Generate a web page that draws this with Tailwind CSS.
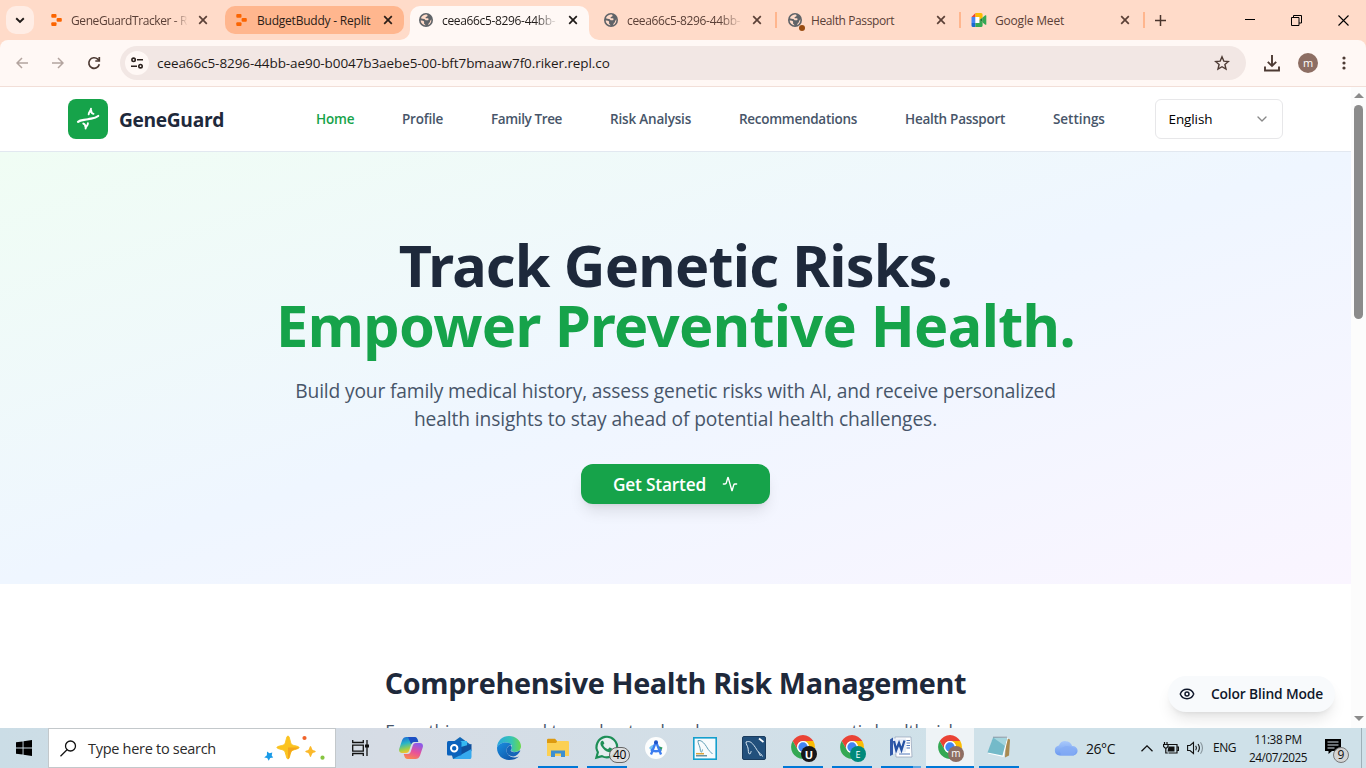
<!DOCTYPE html>
<html lang="en">
<head>
<meta charset="utf-8">
<title>GeneGuard</title>
<script src="https://cdn.jsdelivr.net/npm/@tailwindcss/browser@4"></script>
</head>
<body class="flex h-screen w-screen flex-col overflow-hidden bg-white font-['Open_Sans','Noto_Sans',sans-serif] text-black">

<!-- shared symbols -->
<svg class="hidden">
  <symbol id="x" viewBox="0 0 10 10"><path d="M1.2 1.2l7.6 7.6M8.8 1.2l-7.6 7.6" stroke="currentColor" stroke-width="1.7" fill="none"/></symbol>
  <symbol id="replit" viewBox="0 0 11 12"><g fill="#fb6400"><rect x=".3" y="0" width="5.2" height="3.7" rx="1"/><rect x="5.6" y="4.1" width="5.2" height="3.7" rx="1"/><rect x=".3" y="8.2" width="5.2" height="3.7" rx="1"/></g></symbol>
  <symbol id="globe" viewBox="0 0 14 14"><circle cx="7" cy="7" r="7" fill="#5f6368"/><path d="M6.6 1.6C8 1.3 8.8 2 8.5 2.9c-.4.8-1.8.6-1.9 1.5-.1.8.9.9 1.700.8 1-.1 1.300.5 1.200 1.200-.2.8-1.200 1-2.100.9-1.300-.1-1.200-1.200-2.300-1.400C4 5.700 3 5.800 1.900 5.300 2.600 3.300 4.300 1.900 6.600 1.600z" fill="#ffdbc9"/><path d="M1.600 7.600c1.600 0 3.100.1 3.500 1.200.3.900-.4 1.200.1 2 .4.600 1.200.6 1.200 1.600C3.800 12.100 1.800 10.200 1.600 7.600zM12.300 6.200c.4 2.500-.9 4.900-3.200 5.900.1-1.200.6-1.600 1.300-2.300.9-.9.700-2.500 1.900-3.600z" fill="#ffdbc9"/></symbol>
  <symbol id="chrome" viewBox="0 0 48 48">
    <path fill="#ea4335" d="M4.950 13A22 22 0 0 1 43.050 13H24A11 11 0 0 0 14.470 29.500Z"/>
    <path transform="rotate(120 24 24)" fill="#fbbc04" d="M4.950 13A22 22 0 0 1 43.050 13H24A11 11 0 0 0 14.470 29.500Z"/>
    <path transform="rotate(240 24 24)" fill="#34a853" d="M4.950 13A22 22 0 0 1 43.050 13H24A11 11 0 0 0 14.470 29.500Z"/>
    <circle cx="24" cy="24" r="11" fill="#fff"/><circle cx="24" cy="24" r="8.600" fill="#4285f4"/>
  </symbol>
</svg>

<!-- tab strip -->
<div class="flex h-10 shrink-0 items-start bg-[#ffdbc9] text-[12px] text-[#5b4037]">
  <div class="mt-1.5 ml-1.5 flex h-7 w-7 items-center justify-center rounded-[10px] bg-[#ffede5]">
    <svg width="10" height="7" viewBox="0 0 10 7"><path d="M1.200 1.300L5 5l3.800-3.700" stroke="#1f1a18" stroke-width="1.900" fill="none"/></svg>
  </div>
  <div class="flex h-10 w-[191px] items-center pl-[17px]">
    <svg width="11" height="12"><use href="#replit"/></svg>
    <span class="ml-[9px] w-[117px] mask-r-from-[88%] mask-r-to-100% pt-0.5 whitespace-nowrap tracking-[-0.400px]">GeneGuardTracker - R</span>
    <svg class="ml-[10px]" width="10" height="10"><use href="#x"/></svg>
  </div>
  <div class="mt-1.5 flex h-7 w-[179px] items-center rounded-[10px] bg-[#ffb68e] pl-[11px] text-[#2b1d17]">
    <svg width="11" height="12"><use href="#replit"/></svg>
    <span class="ml-2.5 w-[116px] pt-0.5 whitespace-nowrap tracking-[-0.220px]">BudgetBuddy - Replit</span>
    <svg class="ml-[10px]" width="10" height="10"><use href="#x"/></svg>
  </div>
  <div class="relative mt-1.5 ml-1.5 flex h-[34px] w-[179px] items-start rounded-t-[10px] bg-[#fff8f5] text-[#1f1a18]">
    <svg class="absolute bottom-0 -left-2.5" width="10" height="10"><path d="M10 0v10H0A10 10 0 0 0 10 0z" fill="#fff8f5"/></svg>
    <svg class="absolute -right-2.5 bottom-0" width="10" height="10"><path d="M0 0v10h10A10 10 0 0 1 0 0z" fill="#fff8f5"/></svg>
    <div class="flex h-7 items-center pl-[9px]">
      <svg width="14" height="14"><use href="#globe"/></svg>
      <span class="ml-[9px] w-[116px] mask-r-from-[80%] mask-r-to-100% pt-0.5 whitespace-nowrap tracking-[-0.340px]">ceea66c5-8296-44bb-</span>
      <svg class="ml-[10px]" width="10" height="10"><use href="#x"/></svg>
    </div>
  </div>
  <div class="flex h-10 w-[187px] items-center pl-[15px]">
    <svg width="14" height="14"><use href="#globe"/></svg>
    <span class="ml-[9px] w-[116px] mask-r-from-[80%] mask-r-to-100% pt-0.5 whitespace-nowrap tracking-[-0.340px]">ceea66c5-8296-44bb-</span>
    <svg class="ml-[9px]" width="10" height="10"><use href="#x"/></svg>
  </div>
  <div class="mt-3 -ml-px h-4 w-0.5 shrink-0 bg-[#ffb68e]"></div>
  <div class="flex h-10 w-[182px] items-center pl-[11px]">
    <div class="relative"><svg width="14" height="14"><use href="#globe"/></svg><div class="absolute top-[12px] left-[11px] h-1.5 w-1.5 rounded-full bg-[#994c12]"></div></div>
    <span class="ml-[9px] w-[116px] pt-0.5 whitespace-nowrap tracking-[-0.400px]">Health Passport</span>
    <svg class="ml-[9px]" width="10" height="10"><use href="#x"/></svg>
  </div>
  <div class="mt-3 h-4 w-0.5 shrink-0 bg-[#ffb68e]"></div>
  <div class="flex h-10 w-[182px] items-center pl-[10px]">
    <svg width="16" height="14" viewBox="0 0 16 14"><path fill="#ea4335" d="M.5 4L4.500 0v4z"/><path fill="#4285f4" d="M.5 4h4v6h-4z"/><path fill="#1967d2" d="M.5 10h4v4H2A1.500 1.500 0 0 1 .5 12.500z"/><path fill="#fff" d="M4.500 4h4v6h-4z"/><path fill="#fbbc04" d="M4.500 0H10a1.600 1.600 0 0 1 1.600 1.600v3L8.500 7V4h-4z"/><path fill="#34a853" d="M4.500 10h4V7l3.100 2.500v3A1.500 1.500 0 0 1 10 14H4.500z"/><path fill="#188038" d="M8.500 7l3.100-2.500v5z"/><path fill="#34a853" d="M11.600 4.500l2.700-2.200c.4-.3 1-.1 1 .4v8.600c0 .5-.6.700-1 .4l-2.700-2.200z"/></svg>
    <span class="ml-[8px] w-[116px] pt-0.5 whitespace-nowrap tracking-[-0.190px]">Google Meet</span>
    <svg class="ml-[9px]" width="10" height="10"><use href="#x"/></svg>
  </div>
  <div class="mt-3 h-4 w-0.5 shrink-0 bg-[#ffb68e]"></div>
  <svg class="mt-[15px] ml-[10px]" width="11" height="11"><path d="M5.500 0v11M0 5.500h11" stroke="#4a352d" stroke-width="1.500"/></svg>
  <div class="ml-auto flex h-10 items-center gap-9 pr-[17px] text-black">
    <svg width="10" height="10"><path d="M0 4.500h10" stroke="#000"/></svg>
    <svg width="11" height="11" fill="none" stroke="#000"><path d="M.5 2.500h7.500v8H.5zM2.500 2.500v-2h8v7.500H8"/></svg>
    <svg width="11" height="11"><path d="M.5.5l10 10M10.500.5l-10 10" stroke="#000" stroke-width="1.100"/></svg>
  </div>
</div>

<!-- toolbar -->
<div class="h-[47px] shrink-0 bg-[#ffdbc9]">
  <div class="flex h-full items-center rounded-t-lg border-b border-[#f2dfd8] bg-[#fff8f5] text-[#5b4037]">
    <svg class="ml-4" width="12" height="12" fill="none" stroke="#b3a49f" stroke-width="1.500"><path d="M12 6H1M6 1L1 6l5 5"/></svg>
    <svg class="ml-6" width="12" height="12" fill="none" stroke="#b3a49f" stroke-width="1.500"><path d="M0 6h11M6 1l5 5-5 5"/></svg>
    <svg class="ml-[23px]" width="14" height="14" fill="none" stroke="#4d3a33" stroke-width="1.700"><path d="M12.300 8.300A5.300 5.300 0 1 1 10.800 3.200L12 4.500"/><path d="M12.300 1v4H8.300"/></svg>
    <div class="ml-[19px] flex h-[34px] w-[1126px] items-center rounded-full bg-[#f2e7e4] pl-[5px]">
      <div class="flex h-6 w-6 items-center justify-center rounded-full bg-[#fff8f5]">
        <svg width="12" height="12" fill="none" stroke="#2b211d" stroke-width="1.600"><circle cx="2.600" cy="2.800" r="1.700"/><path d="M6 2.800h6M0 9.200h6"/><circle cx="9.500" cy="9.200" r="1.700"/></svg>
      </div>
      <span class="ml-2 text-[13.500px] tracking-[-0.080px] whitespace-nowrap text-[#1f1a18]">ceea66c5-8296-44bb-ae90-b0047b3aebe5-00-bft7bmaaw7f0.riker.repl.co</span>
      <svg class="mr-[16px] ml-auto" width="16" height="16" viewBox="0 0 16 16" fill="none" stroke="#4d3a33" stroke-width="1.400"><path d="M8 1.800l1.800 4.300 4.600.4-3.500 3 1.100 4.600L8 11.700l-4 2.400 1.100-4.600-3.500-3 4.600-.4z"/></svg>
    </div>
    <svg class="ml-[18px]" width="16" height="17" fill="none" stroke="#4d3a33" stroke-width="1.900"><path d="M8 0v11M3.800 6.800L8 11l4.200-4.200M1 11.500V15.500H15V11.500"/></svg>
    <div class="ml-[18px] flex h-5 w-5 items-center justify-center rounded-full bg-[#8d6e63] text-[11px] leading-none text-white"><span class="-mt-0.5">m</span></div>
    <svg class="ml-[24px]" width="4" height="14" fill="#4d3a33"><circle cx="2" cy="2" r="1.600"/><circle cx="2" cy="7" r="1.600"/><circle cx="2" cy="12" r="1.600"/></svg>
  </div>
</div>

<!-- page viewport -->
<div class="flex min-h-0 flex-1">
  <div class="relative w-[1351px] overflow-hidden bg-white">
    <header class="flex h-[65px] items-center border-b border-[#e2e8f0] pl-[68px]">
      <div class="flex h-10 w-10 items-center justify-center rounded-lg bg-[#16a34a]">
        <svg width="24" height="24" viewBox="0 0 24 24" fill="none" stroke="#fff" stroke-linecap="round" stroke-linejoin="round"><path d="M2 14.800C4.500 12.700 8 13.300 12 12.300S19 11.500 22.200 9" stroke-width="2.200"/><path d="M15 1.800C15 4 12.500 4.800 12.700 7.300M15.200 3.500C15.200 5.500 16 6.600 17.500 6.900M9.600 21.500C9.600 19.500 12 18.800 11.900 16.300M9.400 20C9.400 18 8.500 17 7.300 16.600" stroke-width="1.900"/></svg>
      </div>
      <div class="ml-[11px] w-[197px] pt-0.5 text-[19.200px] font-bold tracking-[-0.340px] text-[#1e293b]">GeneGuard</div>
      <nav class="flex gap-12 pt-px text-[13.500px] font-semibold whitespace-nowrap text-[#475569]">
        <a class="w-[38px] tracking-[-0.140px] text-[#16a34a]">Home</a>
        <a class="w-[41px] tracking-[-0.200px]">Profile</a>
        <a class="w-[71px] tracking-[-0.380px]">Family Tree</a>
        <a class="w-[81px] tracking-[-0.180px]">Risk Analysis</a>
        <a class="w-[118px] tracking-[-0.280px]">Recommendations</a>
        <a class="w-[100px] tracking-[-0.260px]">Health Passport</a>
        <a class="w-[52px] tracking-[-0.050px]">Settings</a>
      </nav>
      <div class="ml-[50px] flex h-10 w-32 items-center justify-between rounded-md border border-[#e7e7e9] pr-3 pl-[12.500px] text-[13.500px] tracking-[-0.100px]">
        <span class="pt-px">English</span>
        <svg width="16" height="16" viewBox="0 0 24 24" fill="none" stroke="#888" stroke-width="2" stroke-linecap="round" stroke-linejoin="round"><path d="m6 9 6 6 6-6"/></svg>
      </div>
    </header>
    <section class="h-[432px] bg-linear-to-br/srgb from-[#f0fdf4] via-[#eff6ff] to-[#faf5ff] pt-20 text-center">
      <h1 class="pt-[3px] font-['Noto_Sans'] text-[57.600px] leading-[60px] font-bold text-[#1e293b]"><span class="block tracking-[-0.800px]">Track Genetic Risks.</span><span class="block tracking-[-0.640px] text-[#16a34a]">Empower Preventive Health.</span></h1>
      <p class="mt-[22px] text-[19.200px] leading-7 text-[#475569]"><span class="block tracking-[-0.150px]">Build your family medical history, assess genetic risks with AI, and receive personalized</span><span class="block tracking-[-0.100px]">health insights to stay ahead of potential health challenges.</span></p>
      <div class="mt-[31px] flex justify-center">
        <div class="flex h-10 w-[189px] items-center rounded-xl bg-[#16a34a] pl-8 text-[17.300px] font-semibold tracking-[-0.200px] whitespace-nowrap text-white shadow-lg">
          <span class="w-[109px] pt-0.5 text-left">Get Started</span>
          <svg width="16" height="16" viewBox="0 0 24 24" fill="none" stroke="#fff" stroke-width="2" stroke-linecap="round" stroke-linejoin="round"><path d="M22 12h-2.480a2 2 0 0 0-1.930 1.460l-2.350 8.360a.25.25 0 0 1-.48 0L9.240 2.180a.25.25 0 0 0-.48 0l-2.350 8.360A2 2 0 0 1 4.490 12H2"/></svg>
        </div>
      </div>
    </section>
    <section class="pt-20 text-center">
      <h2 class="pt-px text-[28.800px] leading-9 font-bold tracking-[-0.350px] text-[#1e293b]">Comprehensive Health Risk Management</h2>
      <p class="mt-[17px] text-[17.300px] leading-7 tracking-[-0.120px] text-[#475569]">Everything you need to understand and manage your genetic health risks</p>
    </section>
    <div class="absolute right-[16px] bottom-4 flex h-9 w-[167px] items-center rounded-full bg-[#f8fafc] pl-[11px] text-[13.800px] font-semibold tracking-[-0.150px] whitespace-nowrap text-[#0f172a] shadow-lg">
      <svg width="16" height="16" viewBox="0 0 24 24" fill="none" stroke="#0f172a" stroke-width="2.200" stroke-linecap="round" stroke-linejoin="round"><path d="M2.060 12.350a1 1 0 0 1 0-.7 10.750 10.750 0 0 1 19.880 0 1 1 0 0 1 0 .7 10.750 10.750 0 0 1-19.880 0"/><circle cx="12" cy="12" r="3"/></svg>
      <span class="ml-4 pt-px">Color Blind Mode</span>
    </div>
  </div>
  <div class="flex w-[15px] flex-col items-center bg-[#fcfcfc] pt-[6px] pb-[7px]">
    <svg width="10" height="5" fill="#8b8b8b"><path d="M5 0l5 5H0z"/></svg>
    <div class="mt-[7px] h-[214px] w-[9px] rounded-full bg-[#8b8b8b]"></div>
    <svg class="mt-auto" width="10" height="5" fill="#8b8b8b"><path d="M0 0h10L5 5z"/></svg>
  </div>
</div>

<!-- taskbar -->
<div class="flex h-10 shrink-0 items-stretch bg-linear-to-r/srgb from-[#cbdde6] via-[#d6dce5] via-[28%] to-[#cfe1e9] to-[70%]">
  <div class="flex w-12 items-center justify-center"><svg width="16" height="16"><path d="M0 2.300L6.600 1.400v6.200H0zM7.500 1.200L16 0v7.600H7.500zM0 8.400h6.600v6.200L0 13.700zM7.500 8.400H16V16l-8.500-1.200z"/></svg></div>
  <div class="flex w-[288px] items-center border border-[#c3c8cb] bg-white pl-[11px]">
    <svg width="17" height="17" fill="none" stroke="#111" stroke-width="1.300"><circle cx="10.500" cy="6" r="5"/><path d="M7 9.700L.5 16.200"/></svg>
    <span class="ml-[11px] w-[176px] pt-0.5 text-[14.500px] tracking-[-0.290px] text-[#2b2b2b]">Type here to search</span>
    <svg width="62" height="26" viewBox="0 0 62 26"><path d="M24 1c1.800 0 2 7 3.700 8.500S35 11 35 12.500 29.500 14.300 27.700 16 25.800 24 24 24s-2-6.500-3.700-8.200S13 14 13 12.500 18.500 11 20.300 9.500 22.200 1 24 1z" fill="#fbc31f" stroke="#fbc31f"/><path d="M24 12.500L35 12.500c0 1.500-5.500 1.800-7.300 3.500S25.800 24 24 24z" fill="#f3a51c"/><path d="M46.500 11c.9 0 1.200 3 2 3.700s3.300.9 3.300 1.800-2.500 1.100-3.300 1.800-1.100 3.700-2 3.700-1.200-3-2-3.700-3.300-.9-3.300-1.800 2.500-1.100 3.300-1.800 1.100-3.700 2-3.700z" fill="#fbb92b"/><path d="M3 16.500l2.500 1.700 2.800-.8-.6 3 1.500 2.200-3 .3-1.500 2.800-1.500-2.700-3-.5 2.700-2.300z" fill="#1a9be8"/><circle cx="40.500" cy="3" r="2.100" fill="#f0632b"/><circle cx="58.500" cy="22.700" r="2.100" fill="#86c440"/></svg>
  </div>
  <!-- pinned and running apps -->
  <div class="flex w-[50px] items-center justify-center pr-px"><svg width="17" height="16" fill="none" stroke="#111" stroke-width="1.300"><path d="M.7 0v2.500h10.600V0M.7 5.200h10.600v6H.7zM.7 16v-2.500h10.600V16M15 0v16"/><path d="M13 4.500h4v3h-4z" fill="#111" stroke="none"/></svg></div>
  <div class="flex w-[49px] items-center justify-center">
    <svg width="24" height="22" viewBox="0 0 24 22"><defs><linearGradient id="ca" x1="0" x2="0.300" y1="0" y2="1"><stop stop-color="#1c5fd8"/><stop offset=".45" stop-color="#28b5c8"/><stop offset=".8" stop-color="#a3cf48"/><stop offset="1" stop-color="#f6c22d"/></linearGradient><linearGradient id="cb" x1=".6" x2=".2" y1="0" y2="1"><stop stop-color="#8d5be8"/><stop offset=".5" stop-color="#e8519a"/><stop offset="1" stop-color="#fb8a4b"/></linearGradient></defs><path d="M7.500 0h8c1.700 0 2.500 1 3 2.500L19.300 5H15c-1.500 0-2.300 1-2.800 2.500l-2 6c-.5 1.500-1.300 2.500-3 2.500H3C.5 16-.5 14 .3 11.500L3 3.500C3.800 1 5.500 0 7.500 0z" fill="url(#ca)"/><path d="M9 0h6.500c1.700 0 2.500 1 3 2.500L19.300 5H15c-1.500 0-2.300 1-2.800 2.500z" fill="#1d4fc4"/><path d="M16.500 22h-8c-1.700 0-2.500-1-3-2.500L4.700 17H9c1.500 0 2.300-1 2.800-2.500l2-6C14.300 7 15.100 6 16.800 6H21c2.500 0 3.500 2 2.700 4.500l-2.700 8c-.8 2.500-2.500 3.500-4.500 3.500z" fill="url(#cb)"/></svg>
  </div>
  <div class="flex w-[49px] items-center justify-center">
    <svg width="25" height="22" viewBox="0 0 25 22"><path d="M2 8L13 0l11 8v12a2 2 0 0 1-2 2H6z" fill="#1066b5"/><path d="M6 4h14v10H6z" fill="#35b8f1"/><path d="M14 10l10.500-3v7L14 19z" fill="#0f4f9c"/><path d="M6 22l18.500-10V20a2 2 0 0 1-2 2z" fill="#36a9ee"/><rect x="0" y="4" width="14.500" height="14.500" rx="1.500" fill="#0a62bd"/><circle cx="7.200" cy="11.300" r="3.200" fill="none" stroke="#fff" stroke-width="2"/></svg>
  </div>
  <div class="flex w-[49px] items-center justify-center">
    <svg width="24" height="24" viewBox="0 0 24 24"><defs><linearGradient id="ea" x1="0" x2="1"><stop stop-color="#2aa7e0"/><stop offset=".6" stop-color="#36c4b4"/><stop offset="1" stop-color="#6bd94b"/></linearGradient><linearGradient id="eb" x1="0" x2="1" y2="1"><stop stop-color="#1b8fe0"/><stop offset="1" stop-color="#0c4a9e"/></linearGradient></defs><path d="M0 11C.5 4.500 5.500 0 12 0s12 4.800 12 10.300c0 3.500-2.800 5.700-6 5.700-2.500 0-4-.9-4-1.800 0-.8 1-1.200 1-3.200 0-2.500-2.500-4.500-6-4.500C5 6.500 1.500 8 0 11z" fill="url(#ea)"/><path d="M0 11.500C1.300 8 5 6.500 9 6.500c2.500 0 4.500 1 5.500 2.500-3 .2-5 2.500-5 5.500 0 4 4 7 8 7 1.500 0 3-.3 4.500-1C19.500 23 16 24 12 24 5.500 24 0 19 0 12z" fill="url(#eb)"/><path d="M9.500 14.500c0-2.500 1.500-4.500 4-5.200C15 10.500 15 12 14.300 13.300c-.5.800-.3 1.500.5 2 2.200 1.300 5.200.8 7.700-.8.600-.3.900.1.700.6-1.500 3-4 5.400-7 5.400-3.700 0-6.700-2.500-6.700-6z" fill="#1565b8"/><path d="M14.400 13.200c-.5.800-.3 1.600.4 2.100 2.200 1.300 5.200.8 7.700-.8-2 1.500-6 2.500-8.100 1-1-.7-.8-1.700 0-2.300z" fill="#d3dee6"/></svg>
  </div>
  <div class="flex w-[49px] flex-col items-center">
    <div class="flex h-[38px] items-center pt-0.5"><svg width="22" height="20" viewBox="0 0 22 20"><path d="M0 2a1.300 1.300 0 0 1 1.300-1.300H8L10 3v4H0z" fill="#dd9a10"/><path d="M0 5h9l1.500-2H21a1 1 0 0 1 1 1v14H0z" fill="#fcd053"/><path d="M4 12.500h14V19h-4v-3.500H8V19H4z" fill="#3c8fd0"/></svg></div>
    <div class="h-0.5 w-10 bg-[#0078d7]"></div>
  </div>
  <div class="relative flex w-[49px] flex-col items-center">
    <div class="flex h-[38px] items-center"><svg width="26" height="26" viewBox="0 0 24 24"><path d="M2.200 21.800l1.400-5A9.500 9.500 0 1 1 7.300 20.400z" fill="#e6eef0" stroke="#1d8f57" stroke-width="2"/><path d="M8.700 6.900c-.3-.6-.5-.6-.9-.6-.9 0-1.900 1-1.900 2.600 0 1 .5 2 1.200 2.900 1.500 2.200 3.700 4.500 7 5 1.800.1 3.200-1 3.200-2.700 0-.3-.1-.4-.4-.5l-2.200-1.100c-.3-.1-.5-.1-.7.2l-.9 1.100c-.2.200-.4.200-.7.100-1.800-.8-3-2-3.800-3.500-.1-.3 0-.4.100-.6l.8-1c.1-.2.100-.3 0-.5z" fill="#1d8f57"/></svg></div>
    <div class="h-0.5 w-10 bg-[#0078d7]"></div>
    <div class="absolute top-[19px] left-[27px] flex h-4 w-[21px] items-center justify-center rounded-full border border-[#666] bg-[#dedede]/90 text-[12px] leading-none tracking-[-0.400px]">40</div>
  </div>
  <div class="flex w-[49px] items-center justify-center">
    <svg width="22" height="22" viewBox="0 0 22 22"><circle cx="11" cy="11" r="11" fill="#fcfdfd"/><path d="M13 9l4.500 1.500-1.500 4z" fill="#2e9e62"/><path d="M4 11c2-3 4-3.500 6-3.500L7 14z" fill="#79c5f2"/><g stroke="#3c7df0" stroke-width="2.300" fill="none"><path d="M10.500 6L6 17.500M11.500 6l4.500 11.500M6 12.500q5 3.500 10 0"/></g><circle cx="11" cy="5.200" r="2" fill="#1f55c8"/></svg>
  </div>
  <div class="flex w-[49px] items-center justify-center">
    <svg width="24" height="23" viewBox="0 0 24 23"><rect x=".8" y=".8" width="22.400" height="21.400" fill="#f7fbfd" stroke="#149fcd" stroke-width="1.600"/><path d="M5 3.500c3-.5 5 1.500 7 4s2.500 4.500 5 7l2.500 2.500M5 3.500c0 3 1 4 1.800 6.500s.2 5 1.700 5c1 0 .5-2 1-2.500" fill="none" stroke="#5b9db5" stroke-width="1"/><path d="M3 16.700h8" stroke="#e0a33a" stroke-width="1.500"/><path d="M3 18.800h11" stroke="#3e7890" stroke-width="1.200"/></svg>
  </div>
  <div class="flex w-[49px] items-center justify-center">
    <svg width="24" height="24" viewBox="0 0 24 24"><rect x=".5" y=".5" width="23" height="23" rx="1.500" fill="#22507c" stroke="#1b3c5e"/><path d="M4 6c4-1.500 6 1 8 3.500s3 5 4.500 6.500 3 2 4 4.500M4 6c0 2.500 1.500 3.500 2 6s0 5 1.500 6c1.500 0 1-2.500 2-3M18.500 20l-2-4" fill="none" stroke="#d7e6f1" stroke-width="1"/><path d="M17 2.500l4.500 3.500" stroke="#fff" stroke-width="1.800"/></svg>
  </div>
  <div class="relative flex w-[49px] flex-col items-center">
    <div class="flex h-[38px] items-center"><svg width="26" height="26"><use href="#chrome"/></svg></div>
    <div class="h-0.5 w-10 bg-[#0078d7]"></div>
    <div class="absolute top-[18px] left-[23px] flex h-4 w-4 items-center justify-center rounded-full bg-[#17171a] text-[11px] leading-none font-bold text-white">U</div>
  </div>
  <div class="relative flex w-[49px] flex-col items-center">
    <div class="flex h-[38px] items-center"><svg width="26" height="26"><use href="#chrome"/></svg></div>
    <div class="h-0.5 w-10 bg-[#0078d7]"></div>
    <div class="absolute top-[18px] left-[23px] flex h-4 w-4 items-center justify-center rounded-full bg-[#00897b] text-[9px] leading-none text-white">E</div>
  </div>
  <div class="flex w-[49px] flex-col items-center">
    <div class="flex h-[38px] items-center"><svg width="24" height="24" viewBox="0 0 24 24"><path d="M6 2h16l1 20H7z" fill="#fff" stroke="#9aa7bd" stroke-width=".8"/><path d="M17.500 5.500H21M17.500 8H21M17.500 10.500H21M17.500 13H21M10 19h11" stroke="#5176b8" stroke-width="1.100"/><path d="M1 4.500l3-2v17l-3 1.500z" fill="#3159a8"/><path d="M4 3.500h13v13.500l-13 2z" fill="#e8eef8"/><path d="M5 6l2.200 9L10 8l2.500 7L15.500 5.500" fill="none" stroke="#2451a4" stroke-width="2.300"/></svg></div>
    <div class="flex h-0.5 w-10"><div class="w-8 bg-[#0078d7]"></div><div class="flex-1 bg-[#5fa8e4]"></div></div>
  </div>
  <div class="relative flex w-[49px] flex-col items-center">
    <div class="flex h-[38px] w-12 items-center justify-center bg-[#eef3f6]"><svg width="26" height="26"><use href="#chrome"/></svg></div>
    <div class="h-0.5 w-12 bg-[#0078d7]"></div>
    <div class="absolute top-[18px] left-[23px] flex h-4 w-4 items-center justify-center rounded-full bg-[#8d6e63] text-[10px] leading-none text-white"><span class="-mt-0.5">m</span></div>
  </div>
  <div class="flex w-[49px] flex-col items-center">
    <div class="flex h-[38px] items-center"><svg width="24" height="22" viewBox="0 0 24 22"><path d="M19 2l4 1.500-1 16-4 2z" fill="#a88a52"/><path d="M6 1.500l15 .5-4.500 19L1 17.500z" fill="#fff"/><path d="M6 1.500l14 .5-4.500 17.500L.5 16.500z" fill="#74bac9"/><path d="M6 1.500l14 .5-2 8z" fill="#a5d6df"/><path d="M6.500 1.200h13" stroke="#556" stroke-dasharray="1 1"/></svg></div>
    <div class="h-0.5 w-10 bg-[#0078d7]"></div>
  </div>
  <!-- notification area -->
  <div class="flex flex-1 items-center pl-[31px] text-[#111]">
    <svg width="25" height="16" viewBox="0 0 25 16"><defs><linearGradient id="cl" x2="0" y2="1"><stop stop-color="#a9c9fb"/><stop offset="1" stop-color="#6c9af0"/></linearGradient></defs><path d="M5.500 15.500a5 5 0 0 1-.6-9.900 7 7 0 0 1 13.200.4A4.800 4.800 0 0 1 19.500 15.500z" fill="url(#cl)"/><path d="M7 14a8 5 0 0 1 12-6.500 4.600 4.600 0 0 1 .5 8H5.500z" fill="#86adf5" opacity=".7"/></svg>
    <span class="ml-[7px] w-[29px] text-[14px] tracking-[-0.450px] whitespace-nowrap">26°C</span>
    <svg class="ml-[26px]" width="12" height="7" fill="none" stroke="#111" stroke-width="1.300"><path d="M.5 6.300L6 .9l5.500 5.400"/></svg>
    <svg class="ml-[10px]" width="16" height="12" fill="none" stroke="#111"><path d="M5.500 2.500h8.500v8.500H5.500M14.500 5h1v3.500h-1M1.500 0v2.500M4 0v2.500M.5 2.500h4.500v2L3.700 6H2L.5 4.500zM2.800 6v5h2" stroke-width="1.200"/><path d="M5.500 4.500h6V9.500h-7z" fill="#111" stroke="none"/></svg>
    <svg class="ml-[8px]" width="17" height="14" fill="none" stroke="#111" stroke-width="1.100"><path d="M.6 4.500H3L6.500 1.500v11L3 9.500H.6z"/><path d="M8.700 4.800q1.500 2.200 0 4.400M11 3q2.800 4 0 8"/><path d="M13.500 1.200q4 5.800 0 11.600" stroke="#88959c"/></svg>
    <span class="ml-[9px] w-6 text-[12px] tracking-[-0.450px]">ENG</span>
    <div class="ml-[12px] w-[58px] text-center text-[11.800px] leading-[18px] tracking-[-0.450px] whitespace-nowrap">11:38 PM<br>24/07/2025</div>
    <div class="relative ml-[18px] h-[18px] w-[24px]">
      <svg width="16" height="15"><path d="M0 0h16v12H7l-3.500 3v-3H0z" fill="#000"/><path d="M2.500 3h11M2.500 6h11M2.500 9h7" stroke="#d3dee6" stroke-width="1.200"/></svg>
      <div class="absolute top-[8px] left-[8px] flex h-4 w-4 items-center justify-center rounded-full border border-[#777] bg-[#d4d4d4]/95 text-[12px] leading-none">9</div>
    </div>
    <div class="mr-1 ml-auto h-10 w-px bg-[#9fb0b8]"></div>
  </div>
</div>
</body>
</html>
